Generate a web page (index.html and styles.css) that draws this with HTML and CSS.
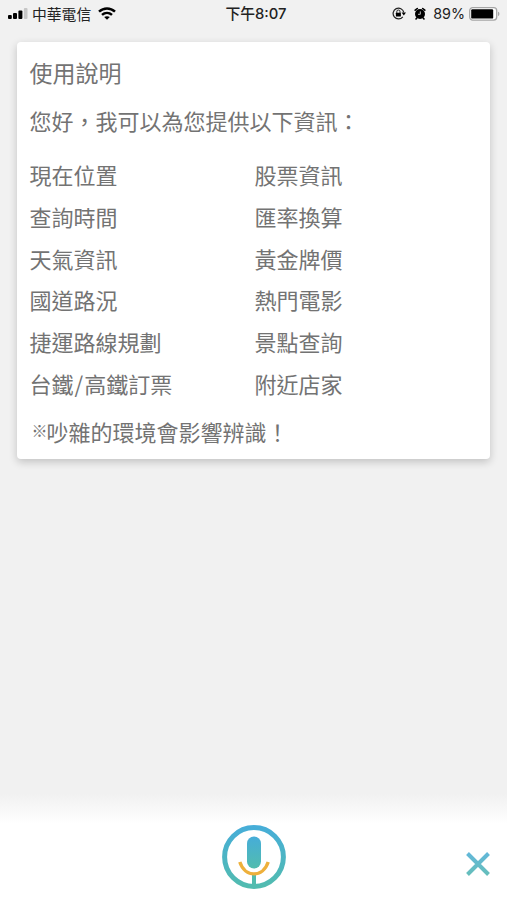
FILE: index.html
```html
<!DOCTYPE html>
<html lang="zh-Hant">
<head>
  <meta charset="UTF-8">
  <meta name="viewport" content="width=device-width, initial-scale=1">
  <title>使用說明</title>
  <link rel="stylesheet" href="styles.css">
</head>
<body>
  <header class="status-bar">
    <div class="status-left">
      <svg class="signal" width="20" height="11" viewBox="0 0 20 11">
        <rect x="0" y="7" width="3.8" height="4" rx="1"/>
        <rect x="5" y="5" width="4" height="6" rx="1"/>
        <rect x="10.4" y="2.4" width="4" height="8.6" rx="1"/>
        <rect x="15.9" y="0" width="3.6" height="11" rx="1" fill="#c6c6c6"/>
      </svg>
      <span class="carrier">中華電信</span>
      <svg class="wifi" width="18" height="13" viewBox="0 0 18 13">
        <g fill="none" stroke="#000" stroke-width="2.5">
          <path d="M1 4.7C5.6 .4 12.4 .4 17 4.7"/>
          <path d="M4 7.9C6.9 5.3 11.1 5.3 14 7.9"/>
        </g>
        <path d="M9 12.8L6.2 10.1C7.8 8.8 10.2 8.8 11.8 10.1Z"/>
      </svg>
    </div>
    <span class="time">下午8:07</span>
    <div class="status-right">
      <svg class="lock" width="14" height="13" viewBox="0 0 14 13">
        <path d="M10.8 9.8A5.4 5.4 0 1 1 11.8 5.4" fill="none" stroke="#222" stroke-width="1.2"/>
        <path d="M9.6 5.6H14L11.8 8.5Z"/>
        <rect x="3.9" y="5.8" width="5" height="3.8" rx=".5"/>
        <path d="M4.8 6V4.6a1.6 1.6 0 0 1 3.2 0V6" fill="none" stroke="#222" stroke-width="1"/>
      </svg>
      <svg class="alarm" width="12" height="13" viewBox="0 0 12 13">
        <circle cx="6" cy="7" r="5"/>
        <path d="M1.2 3.2L3.3 1.5M10.8 3.2L8.7 1.5M2.8 11L2 12M9.2 11L10 12" stroke="#000" stroke-width="1.6" stroke-linecap="round"/>
        <path d="M6.3 4.4V7.3H4" fill="none" stroke="#d8d8d8" stroke-width=".9"/>
      </svg>
      <span class="percent">89%</span>
      <svg class="battery" width="31" height="14" viewBox="0 0 31 14">
        <rect x=".7" y=".7" width="27" height="12.4" rx="3" fill="#fff" stroke="#a5a5a5" stroke-width="1.3"/>
        <rect x="2.2" y="2.2" width="22" height="9.4" rx="1.2"/>
        <path d="M29 4.8c1.9.5 1.9 3.8 0 4.3Z" fill="#a5a5a5"/>
      </svg>
    </div>
  </header>

  <main class="card">
    <h1>使用說明</h1>
    <p class="intro">您好，我可以為您提供以下資訊：</p>
    <ul class="topics">
      <li>現在位置</li>
      <li>股票資訊</li>
      <li>查詢時間</li>
      <li>匯率換算</li>
      <li>天氣資訊</li>
      <li>黃金牌價</li>
      <li>國道路況</li>
      <li>熱門電影</li>
      <li>捷運路線規劃</li>
      <li>景點查詢</li>
      <li>台鐵<span class="slash">/</span>高鐵訂票</li>
      <li>附近店家</li>
    </ul>
    <p class="note"><span class="mark">※</span>吵雜的環境會影響辨識！</p>
  </main>

  <footer class="voice-bar">
    <button class="mic" aria-label="語音輸入">
      <svg width="64" height="64" viewBox="0 0 64 64">
        <defs>
          <linearGradient id="micColor" gradientUnits="userSpaceOnUse" x1="32" y1="0" x2="32" y2="64">
            <stop offset="0" stop-color="#46add9"/>
            <stop offset="1" stop-color="#52bcae"/>
          </linearGradient>
          <linearGradient id="capsuleColor" x1="0" y1="0" x2="0" y2="1">
            <stop offset="0" stop-color="#46add9"/>
            <stop offset="1" stop-color="#52bcae"/>
          </linearGradient>
        </defs>
        <circle cx="32" cy="32" r="29.4" fill="none" stroke="url(#micColor)" stroke-width="5"/>
        <rect x="25" y="11.5" width="14" height="32" rx="7" fill="url(#capsuleColor)"/>
        <rect x="30" y="49" width="4" height="12" fill="#52bcae"/>
        <path d="M17.8 37C23 52.8 41 52.8 46.2 37" fill="none" stroke="#eeb03b" stroke-width="3.4"/>
      </svg>
    </button>
    <button class="close" aria-label="關閉">
      <svg width="26" height="26" viewBox="0 0 26 26">
        <defs>
          <linearGradient id="closeColor" gradientUnits="userSpaceOnUse" x1="0" y1="0" x2="0" y2="26">
            <stop offset="0" stop-color="#62b7dc"/>
            <stop offset="1" stop-color="#66bfb8"/>
          </linearGradient>
        </defs>
        <path d="M2.5 2.5L23.5 23.5M23.5 2.5L2.5 23.5" stroke="url(#closeColor)" stroke-width="4"/>
      </svg>
    </button>
  </footer>
</body>
</html>
```
FILE: styles.css
```css
* {
  box-sizing: border-box;
}

body {
  display: flex;
  flex-direction: column;
  height: 900px;
  margin: 0;
  background-color: #f1f1f1;
  color: #737373;
  font-family: "Noto Sans CJK TC", sans-serif;
  overflow: hidden;
}

/* status bar */

.status-bar {
  display: grid;
  grid-template-columns: 1fr auto 1fr;
  align-items: center;
  height: 27px;
  padding: 0 7px 0 8px;
  color: #222;
  font-size: 14.8px;
  line-height: 26px;
}

.status-left,
.status-right {
  display: flex;
  align-items: center;
}

.status-right {
  justify-content: flex-end;
}

.carrier {
  margin: 0 7px 0 4px;
}

.time {
  font-family: "Inter", "Noto Sans CJK TC", sans-serif;
  font-size: 14.8px;
  font-weight: 500;
  margin-left: 4px;
}

.percent {
  margin: 0 4px 0 7px;
  font-family: "Inter", sans-serif;
  font-size: 14.3px;
}

.alarm {
  margin-left: 8px;
}

/* instructions card */

.card {
  width: 473px;
  height: 417px;
  margin: 15px 0 0 17px;
  padding: 11px 13px 0 12.5px;
  border-radius: 4px;
  background-color: #fff;
  box-shadow: 0 3px 8px rgba(0, 0, 0, 0.2);
  font-size: 22px;
}

.card h1 {
  margin: 0;
  font-size: 23px;
  font-weight: 400;
  line-height: 38px;
}

.intro {
  margin: 10px 0 15px;
  line-height: 38px;
}

.topics {
  display: grid;
  grid-template-columns: 225px 1fr;
  grid-auto-rows: 41.75px;
  margin: 0;
  padding: 0;
  line-height: 41.75px;
  list-style: none;
}

.slash {
  margin: 0 1px;
}

.note {
  margin: 7px 0 0 2px;
  line-height: 38px;
}

.mark {
  display: inline-block;
  width: 15px;
  font-size: 16px;
  font-weight: 500;
  vertical-align: 4px;
  line-height: 1;
}

/* bottom bar */

.voice-bar {
  display: grid;
  grid-template-columns: 1fr 64px 1fr;
  align-items: center;
  height: 106px;
  margin-top: auto;
  padding: 20px 16px 0 17px;
  background: linear-gradient(#f1f1f1, #fff 30px);
}

.voice-bar button {
  display: flex;
  padding: 0;
  border: none;
  background: none;
  cursor: pointer;
}

.mic {
  grid-column: 2;
}

.close {
  justify-self: end;
  margin-top: 13px;
}
```
